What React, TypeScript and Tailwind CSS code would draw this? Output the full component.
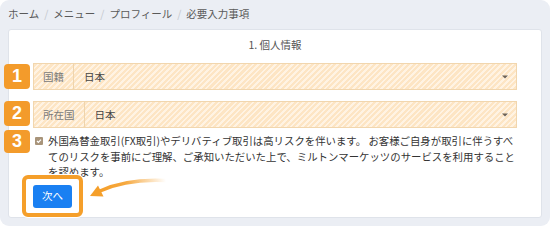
import React from 'react';

const stripes =
  'bg-[repeating-linear-gradient(135deg,#fde5c4_0px,#fde5c4_2.2px,#fff3e3_2.2px,#fff3e3_4px)]';

const Caret = () => (
  <svg width="6" height="4" viewBox="0 0 6 4" className="ml-auto mr-[8px]">
    <path d="M0 0.5h6L3 3.5z" fill="#6b6258" />
  </svg>
);

const SelectRow: React.FC<{ label: string; value: string; className?: string }> = ({ label, value, className }) => (
  <div className={`flex h-[27px] items-center border border-[#f1d6ae] ${stripes} ${className ?? ''}`}>
    <div className="flex h-full items-center border-r border-[#efd4ac] px-[9px] text-[#7a7a7a]">{label}</div>
    <div className="pl-[10px] text-[#444]">{value}</div>
    <Caret />
  </div>
);

const Badge: React.FC<{ n: number; top: string; h: string }> = ({ n, top, h }) => (
  <div
    className={`absolute left-[4px] ${top} ${h} flex w-[26px] items-center justify-center rounded-[4px] bg-[#f39b2b] font-['Liberation_Sans',sans-serif] text-[18px] font-bold text-white`}
  >
    {n}
  </div>
);

export default function App() {
  return (
    <div className="h-[226px] w-[550px] bg-white font-['Noto_Sans_CJK_JP',sans-serif] text-[10.5px]">
      <div className="relative h-full rounded-[9px] bg-[#ebeef4] px-2 pt-[6px]">
        {/* Breadcrumb */}
        <div className="flex h-[16px] items-center gap-[5px] text-[#5a5a5a]">
          <span>ホーム</span>
          <span className="text-[#c4c8ce]">/</span>
          <span>メニュー</span>
          <span className="text-[#c4c8ce]">/</span>
          <span>プロフィール</span>
          <span className="text-[#c4c8ce]">/</span>
          <span>必要入力事項</span>
        </div>

        {/* Card */}
        <div className="mt-[7px] rounded-[3px] border border-[#dfe3ea] bg-white px-[24px] pb-[9px] pt-[7px]">
          <div className="h-[16px] text-center leading-[16px] text-[#555]">1. 個人情報</div>
          <SelectRow label="国籍" value="日本" className="mt-[10px]" />
          <SelectRow label="所在国" value="日本" className="mt-[11px]" />

          <div className="mt-[5px] flex items-start gap-[5px]">
            <div className="mt-[4px] ml-[2px] flex h-[8px] w-[8px] shrink-0 items-center justify-center rounded-[1px] bg-[#a8947a]">
              <svg width="6" height="6" viewBox="0 0 6 6">
                <path d="M1 3l1.4 1.4L5 1.6" stroke="#fff" strokeWidth="1.2" fill="none" />
              </svg>
            </div>
            <p className="text-[10.4px] leading-[15.6px] text-[#333]">
              外国為替金取引(FX取引)やデリバティブ取引は高リスクを伴います。 お客様ご自身が取引に伴うすべてのリスクを事前にご理解、ご承知いただいた上で、ミルトンマーケッツのサービスを利用することを認めます。
            </p>
          </div>

          <button className="mt-[5px] h-[23px] w-[39px] rounded-[3px] bg-[#1a80f2] text-[10.5px] text-white">
            次へ
          </button>
        </div>

        {/* Annotations */}
        <Badge n={1} top="top-[64px]" h="h-[25px]" />
        <Badge n={2} top="top-[101px]" h="h-[25px]" />
        <Badge n={3} top="top-[130px]" h="h-[23px]" />

        <div className="absolute left-[22px] top-[175px] h-[42px] w-[61px] rounded-[6px] border-4 border-[#f59f2a] shadow-[0_0_0_1px_#fff]" />

        <svg className="absolute left-0 top-0" width="550" height="226" viewBox="0 0 550 226">
          <defs>
            <linearGradient id="ag" gradientUnits="userSpaceOnUse" x1="166" y1="181" x2="100" y2="191">
              <stop offset="0" stopColor="#f59f2a" stopOpacity="0" />
              <stop offset="0.6" stopColor="#f59f2a" stopOpacity="0.9" />
              <stop offset="1" stopColor="#f59f2a" />
            </linearGradient>
          </defs>
          <path d="M166 180.5Q127 178.5 100 191" stroke="url(#ag)" strokeWidth="3.5" fill="none" strokeLinecap="round" />
          <path d="M90 196L98 185.5L103.5 196.5z" fill="#f59f2a" />
        </svg>
      </div>
    </div>
  );
}
